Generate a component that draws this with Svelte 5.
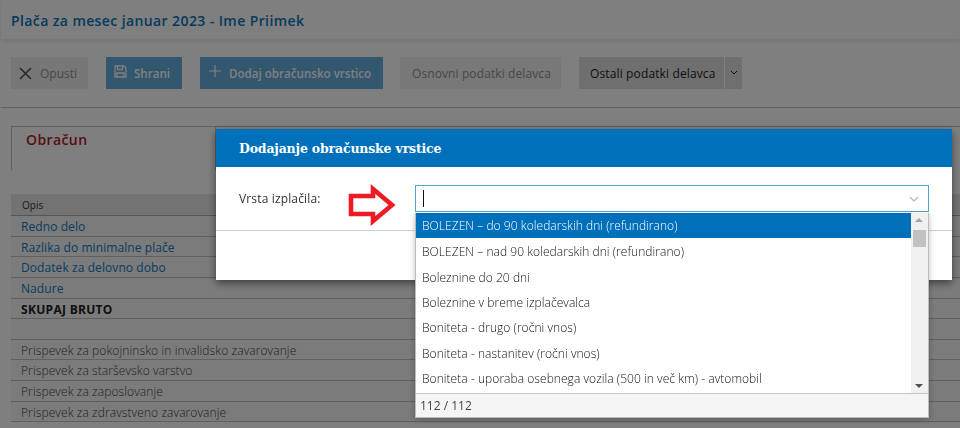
<script>
  const rows = [
    { t: 'Redno delo', k: 'link' },
    { t: 'Razlika do minimalne plače', k: 'link' },
    { t: 'Dodatek za delovno dobo', k: 'link' },
    { t: 'Nadure', k: 'link' },
    { t: 'SKUPAJ BRUTO', k: 'bold' },
    { t: '\u00a0', k: '' },
    { t: 'Prispevek za pokojninsko in invalidsko zavarovanje', k: '' },
    { t: 'Prispevek za starševsko varstvo', k: '' },
    { t: 'Prispevek za zaposlovanje', k: '' },
    { t: 'Prispevek za zdravstveno zavarovanje', k: '' }
  ];
  const options = [
    'BOLEZEN – do 90 koledarskih dni (refundirano)',
    'BOLEZEN – nad 90 koledarskih dni (refundirano)',
    'Boleznine do 20 dni',
    'Boleznine v breme izplačevalca',
    'Boniteta - drugo (ročni vnos)',
    'Boniteta - nastanitev (ročni vnos)',
    'Boniteta - uporaba osebnega vozila (500 in več km) - avtomobil'
  ];
</script>

<div class="page">
  <header class="head"><h1>Plača za mesec januar 2023 - Ime Priimek</h1></header>
  <div class="toolbar">
    <button class="btn ghost">
      <svg width="13" height="13" viewBox="0 0 13 13"><path d="M1 1l11 11M12 1L1 12" stroke="currentColor" stroke-width="1.6" fill="none"/></svg>
      <span class="mutedtext">Opusti</span>
    </button>
    <button class="btn primary save">
      <svg width="13" height="13" viewBox="0 0 13 13" class="up"><path d="M1 1h9l2 2v9H1zM3.5 1v3.5h5V1M3 12V8h7v4" stroke="currentColor" stroke-width="1.3" fill="none"/></svg>
      Shrani
    </button>
    <button class="btn primary add">
      <svg width="12" height="12" viewBox="0 0 12 12" class="up"><path d="M6 0v12M0 6h12" stroke="currentColor" stroke-width="1.2" fill="none"/></svg>
      Dodaj obračunsko vrstico
    </button>
    <button class="btn soft">Osnovni podatki delavca</button>
    <div class="split">
      <button class="btn dark">Ostali podatki delavca</button>
      <button class="btn dark caret" aria-label="Več">
        <svg width="8" height="6" viewBox="0 0 8 6"><path d="M1 1l3 3 3-3" stroke="currentColor" stroke-width="1" fill="none"/></svg>
      </button>
    </div>
  </div>
  <div class="content">
    <div class="tabs">
      <div class="tab">Obračun</div>
      <div class="tabrest"></div>
    </div>
    <div class="thead">Opis</div>
    {#each rows as r}
      <div class="row {r.k}">{r.t}</div>
    {/each}
  </div>
</div>

<div class="overlay"></div>

<div class="modal">
  <div class="mhead">Dodajanje obračunske vrstice</div>
  <div class="mbody">
    <span class="label">Vrsta izplačila:</span>
    <svg class="arrow" width="50" height="45" viewBox="0 0 50 45"><path d="M3 13H25V6L44 22L25 38V31H3Z" fill="#fff" stroke="#ed1c24" stroke-width="4.6"/></svg>
    <div class="field">
      <span class="cursor"></span>
      <svg class="chev" width="10" height="6" viewBox="0 0 10 6"><path d="M1 1l4 4 4-4" stroke="#bbb" stroke-width="1.4" fill="none"/></svg>
    </div>
  </div>
  <div class="mfoot"></div>
</div>

<div class="drop">
  <div class="listwrap">
    <ul>
      {#each options as o, i}
        <li class:active={i === 0}>{o}</li>
      {/each}
    </ul>
    <div class="scroll">
      <span class="tri up-t"></span>
      <span class="thumb"></span>
      <span class="tri down-t"></span>
    </div>
  </div>
  <div class="count">112 / 112</div>
</div>

<style>
  :global(body) {
    margin: 0;
    background: #fff;
    font-family: "Open Sans", "Noto Sans", sans-serif;
    font-size: 12px;
    overflow: hidden;
  }
  * { box-sizing: border-box; }
  .page {
    width: 960px;
    height: 428px;
    overflow: hidden;
    background: #fff;
    padding: 1px 0 0 1px;
  }
  .head {
    height: 38px;
    display: flex;
    align-items: center;
    padding-left: 10px;
    background: #fefefe;
    box-shadow: 0 2px 6px rgba(0,0,0,.1);
  }
  h1 {
    margin: 0;
    font-size: 14px;
    font-weight: 600;
    color: #0c74bc;
    letter-spacing: 0.4px;
  }
  .toolbar {
    height: 69px;
    display: flex;
    align-items: center;
    padding: 0 0 0 10px;
    border-bottom: 1px solid #c4c4c4;
  }
  .btn {
    height: 32px;
    border: 0;
    font: inherit;
    display: inline-flex;
    align-items: center;
    flex: none;
  }
  .ghost { background: #eeeeee; color: #555; gap: 8px; padding: 0 0 0 8px; width: 77px; margin-right: 18px; }
  .mutedtext { color: #909090; }
  .primary { background: #66aede; color: #fff; font-weight: 600; font-size: 11.6px; }
  .save { width: 76px; padding-left: 8px; gap: 7px; margin-right: 18px; }
  .add { width: 183px; padding-left: 9px; gap: 8px; margin-right: 17px; }
  .up { margin-top: -4px; }
  .soft { width: 161px; padding-left: 12px; background: #f0f0f0; color: #909090; letter-spacing: .1px; margin-right: 18px; }
  .dark { background: #dedede; color: #222; padding: 0 0 0 11px; width: 145px; letter-spacing: .13px; }
  .split { display: flex; gap: 1px; }
  .caret { padding: 0; width: 17px; justify-content: center; }
  .content { padding: 18px 0 0 10px; }
  .tabs { display: flex; height: 44px; }
  .tab {
    width: 205px;
    border: 1px solid #c0c0c0;
    border-bottom: 0;
    padding: 3px 0 0 14px;
    font-size: 14px;
    font-weight: 600;
    color: #b02026;
    letter-spacing: 0.4px;
  }
  .tabrest { flex: 1; border-top: 1px solid #c0c0c0; }
  .thead {
    margin-top: 24px;
    height: 22px;
    background: #e6e6e6;
    border-bottom: 1px solid #aaa;
    font-size: 10px;
    padding: 4px 0 0 11px;
    color: #333;
  }
  .row {
    height: 20.65px;
    border-bottom: 1px solid #c0c0c0;
    background: #f6f6f6;
    padding-left: 10px;
    line-height: 21px;
    color: #444;
    font-weight: 300;
    letter-spacing: .1px;
  }
  .row.link { color: #0e7ac4; font-weight: 400; letter-spacing: .08px; }
  .row.bold { font-weight: 700; color: #222; letter-spacing: .3px; }
  .overlay {
    position: fixed;
    inset: 0;
    background: rgba(0,0,0,.5);
  }
  .modal {
    position: fixed;
    left: 216px;
    top: 129px;
    width: 736px;
    height: 151px;
    background: #fff;
    box-shadow: 0 3px 8px rgba(0,0,0,.5);
  }
  .mhead {
    height: 38px;
    background: #0070bb;
    color: #fff;
    font-family: "DejaVu Serif", "Liberation Serif", serif;
    font-size: 12.5px;
    letter-spacing: -.17px;
    font-weight: 700;
    padding-left: 23px;
    line-height: 39px;
  }
  .mbody { height: 63px; position: relative; }
  .label { position: absolute; left: 23px; top: 24px; color: #333; line-height: 16px; letter-spacing: .15px; }
  .arrow { position: absolute; left: 132px; top: 16px; }
  .field {
    position: absolute;
    left: 199px;
    top: 18px;
    width: 514px;
    height: 27px;
    background: #fff;
    border: 1px solid #5ba0d0;
  }
  .cursor { position: absolute; left: 7px; top: 4px; width: 1px; height: 17px; background: #111; }
  .chev { position: absolute; right: 9px; top: 10px; }
  .mfoot { border-top: 1px solid #cfcfcf; height: 50px; }
  .drop {
    position: fixed;
    left: 415px;
    top: 213px;
    width: 514px;
    height: 205px;
    background: #fff;
    border: solid #bbb;
    border-width: 0 1px 1px 1px;
    display: flex;
    flex-direction: column;
    box-shadow: 0 2px 6px rgba(0,0,0,.25);
  }
  .listwrap { flex: 1; display: flex; min-height: 0; }
  ul { margin: 0; padding: 0; list-style: none; flex: 1; }
  li {
    height: 25.33px;
    padding-left: 6px;
    line-height: 27px;
    color: #111;
    font-weight: 300;
    letter-spacing: .05px;
    white-space: nowrap;
  }
  li.active { background: #0070bb; color: #fff; line-height: 26px; }
  .scroll {
    width: 17px;
    background: #f0f0f0;
    position: relative;
  }
  .tri { position: absolute; left: 4px; width: 0; height: 0; border: 4px solid transparent; }
  .up-t { top: 5px; border-top: 0; border-bottom: 4px solid #a3a3a3; }
  .down-t { bottom: 5px; border-bottom: 0; border-top: 4px solid #505050; }
  .thumb { position: absolute; left: 2px; top: 17px; width: 13px; height: 17px; background: #c1c1c1; }
  .count {
    height: 24px;
    background: #f5f5f5;
    border-top: 1px solid #c4c4c4;
    padding-left: 4px;
    line-height: 24px;
    color: #444;
  }
</style>
